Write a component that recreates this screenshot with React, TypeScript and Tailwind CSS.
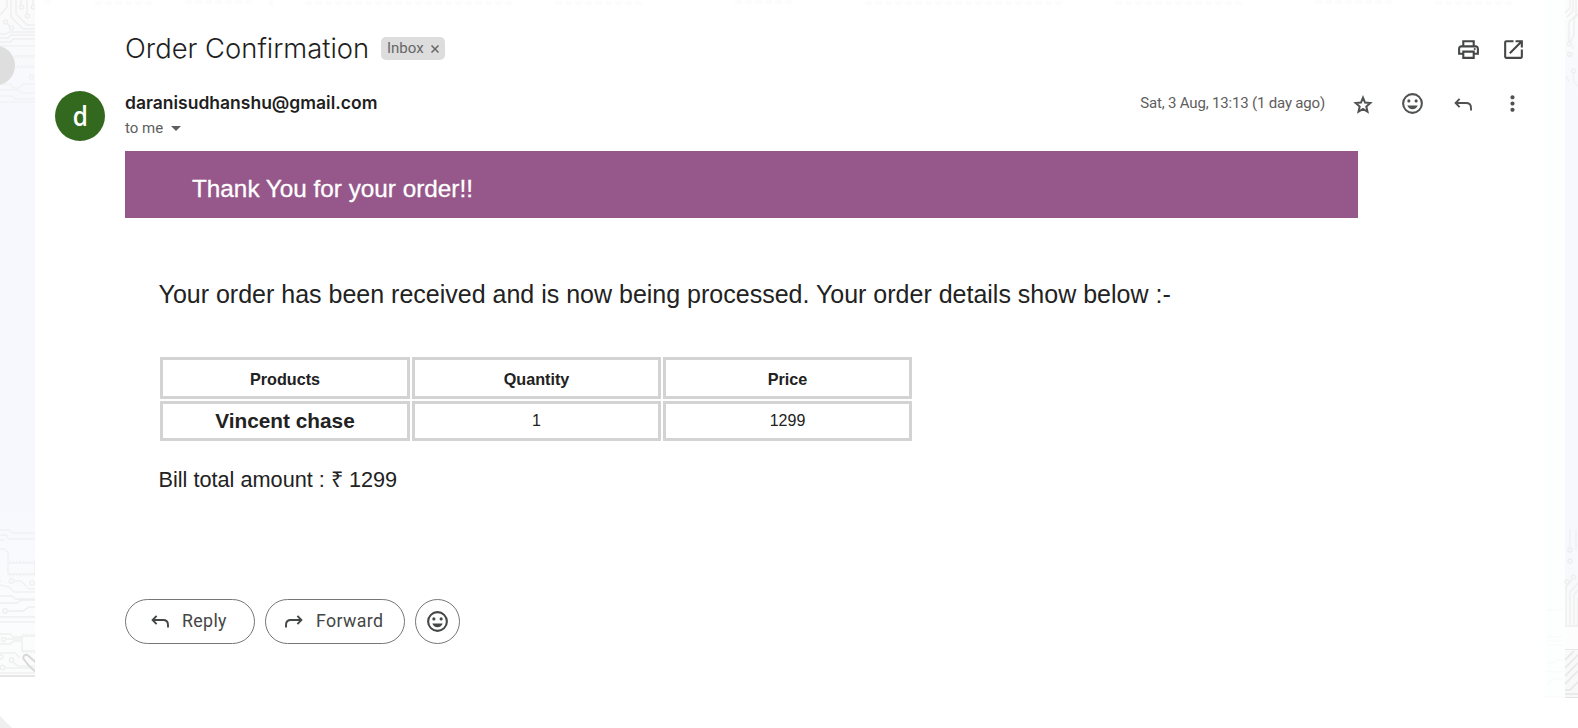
import type { ReactNode } from "react";
import { MdArrowDropDown, MdMoreVert, MdOpenInNew, MdOutlinePrint } from "react-icons/md";

function ReplyIcon({ flip = false }: { flip?: boolean }) {
  return (
    <svg viewBox="0 0 20 20" className={flip ? "size-[20px] -scale-x-100" : "size-[20px]"} fill="none" stroke="currentColor" strokeWidth="1.9">
      <path d="M6.6 3.9 2.6 8l4 4.100M2.900 8h10.200c3 0 4.900 2 4.900 4.900V15.600" />
    </svg>
  );
}

function StarIcon() {
  return (
    <svg viewBox="0 0 24 24" className="mt-[2px] size-[24px]" fill="none" stroke="currentColor" strokeWidth="2">
      <path d="m12 4.700 2 4.900 5.300.450-4 3.500 1.200 5.200-4.500-2.750-4.500 2.750 1.200-5.200-4-3.500 5.300-.450z" />
    </svg>
  );
}

function SmileIcon() {
  return (
    <svg viewBox="0 0 24 24" className="size-[25px]">
      <circle cx="12" cy="12" r="9" fill="none" stroke="currentColor" strokeWidth="2" />
      <circle cx="8.5" cy="9.5" r="1.5" fill="currentColor" />
      <circle cx="15.5" cy="9.5" r="1.5" fill="currentColor" />
      <path d="M7 14h10c-.8 2.200-2.700 3.500-5 3.500S7.800 16.200 7 14z" fill="currentColor" />
    </svg>
  );
}

/* Faded circuit-board wallpaper left of the message card */
function LeftWallpaper() {
  return (
    <svg viewBox="0 0 35 728" className="block h-[728px] w-[35px]" fill="none">
      <defs>
        <linearGradient id="lw" x1="0" y1="0" x2="0" y2="676" gradientUnits="userSpaceOnUse">
          <stop offset="0" stopColor="#fbfbfb" />
          <stop offset=".17" stopColor="#f6f8fd" />
          <stop offset=".74" stopColor="#f6f8fd" />
          <stop offset=".9" stopColor="#fbfcfd" />
          <stop offset="1" stopColor="#fcfcfc" />
        </linearGradient>
      </defs>
      <rect width="35" height="676" fill="url(#lw)" />
      <g stroke="#efefef" strokeWidth="1.500">
        <path d="M7 0v7l-7 8M11 0v17l12 12h12M16 0v14l11 11h8M21 0v5M27 0v14M33 0v5" />
        <circle cx="21.500" cy="7" r="2" />
        <circle cx="27.500" cy="16" r="2" />
        <circle cx="33.500" cy="7" r="2" />
        <circle cx="5.500" cy="22" r="2" />
        <circle cx="11.500" cy="28" r="2" />
        <path d="m7 23.500 3 3M0 34h6l3-2h26M0 38h8l3-3h24M0 42h10l3-3h22" />
      </g>
      <g stroke="#f1f2f4" strokeWidth="1.500">
        <path d="M0 46h35M14 56h21M14 67h21" />
        <path d="M14 57.500h21M14 65.500h21" strokeDasharray="1.500 2" />
        <path d="M0 84h10l4 4h5l4-4h12M0 90h18l4 3h13M0 96h12l3 3h20M0 102h35" />
        <circle cx="31.500" cy="77" r="2" />
      </g>
      <circle cx="-5" cy="65.500" r="20" fill="#dedede" />
      <g stroke="#eff1f4" strokeWidth="1.500">
        <path d="M0 530h9l4 3h22M0 535h6l3 4h26M0 540h5M0 549h4l4 3v9M8 563h27v11H8z" />
        <path d="M9 561.500h26M9 575.500h26" strokeDasharray="1.500 2" />
        <path d="M14 581h7l8 8h6M0 581h1M0 585l9 2 5 5h21" />
        <circle cx="11.500" cy="581" r="2.200" />
        <circle cx="32" cy="583" r="2.200" />
      </g>
      <g stroke="#eeefef" strokeWidth="1.400">
        <path d="M0 596h12l3 3h20M0 603h17l4-3h14M8 611h15l6-4h6M0 617h35M0 622h35" />
        <circle cx="5" cy="611" r="2.200" />
        <path d="M0 634h10l3 3h8M6 639h15M0 644h10l4-3h7M35 636H22v15h13" />
        <path d="M23 634.500h12M23 652.500h12" strokeDasharray="1.500 2" />
        <circle cx="3.500" cy="639.500" r="2" />
        <circle cx="11.500" cy="660" r="2.200" />
        <path d="m13 662 5 4h17M0 653h15l5 5M5 668h30M0 673h35" />
        <circle cx="2.500" cy="667.500" r="2.200" />
        <circle cx="1" cy="657" r="2" />
      </g>
      <path d="M36 671.500c-3-1-6-4-12-12-2-3 1-6 4-4l8 7" stroke="#d8d8d8" strokeWidth="2" />
      <path d="M0 676h35" stroke="#e6e6e6" strokeWidth="2" />
      <path d="M0 716v12h12z" fill="#efefef" />
    </svg>
  );
}

/* Same wallpaper on the right: a nearly opaque 20px band, then 13px of open background */
function RightWallpaper() {
  return (
    <svg viewBox="0 0 33 728" className="block h-[728px] w-[33px]" fill="none">
      <defs>
        <linearGradient id="rw" x1="0" y1="0" x2="0" y2="698" gradientUnits="userSpaceOnUse">
          <stop offset="0" stopColor="#fcfcfc" />
          <stop offset=".14" stopColor="#f6f8fd" />
          <stop offset=".78" stopColor="#f6f8fd" />
          <stop offset=".9" stopColor="#fafafb" />
          <stop offset="1" stopColor="#f8f8f8" />
        </linearGradient>
      </defs>
      <rect width="20" height="698" fill="#fdfefe" />
      <rect x="20" width="13" height="698" fill="url(#rw)" />
      <path d="M2 610h16M2 637h16M2 641h16M2 645h16M2 663h6l4-3h6M2 672h16M2 685l6-6h10M0 697h20" stroke="#f9f9f9" />
      <g stroke="#efefef" strokeWidth="1.500">
        <path d="M20 13l5-5V0M22 17l6-6V0M24 22v20M24 22l7-7V0M28 46v3M28 53l-4 3M33 14l-4 5v16l-4 7" />
        <circle cx="24.500" cy="44" r="2" />
        <circle cx="24.500" cy="54.500" r="2" />
        <circle cx="28.500" cy="71" r="2" />
        <path d="M21 76l3 6M28.500 73v8l4 5" stroke="#f0f1f4" />
        <path d="M25 530v18M31 530v20" stroke="#eff0f3" />
        <circle cx="25" cy="550" r="2" stroke="#ebedf0" />
        <circle cx="25" cy="561" r="2" stroke="#ebedf0" />
        <circle cx="28.500" cy="577" r="2" />
        <circle cx="22" cy="582" r="2" />
        <path d="M27 579l-6 8v38M33 583l-8 9v33M33 590l-4 5v30M33 598v27" />
      </g>
      <rect x="20" y="627" width="13" height="22" fill="#fdfdfd" />
      <path d="M20 626h13M20 649.500h13" stroke="#e8e8e8" />
      <path d="M20 660l9-9M20 668l13-13M20 676l13-13M20 684l13-13M20 690h5l8-8M20 694h13" stroke="#eaeaea" strokeWidth="1.800" />
      <path d="M20 697.500h13" stroke="#e2e2e2" />
    </svg>
  );
}

function Cell({ children, className }: { children: ReactNode; className: string }) {
  return <div className={`flex items-center justify-center border-[3px] border-[#d3d3d3] ${className}`}>{children}</div>;
}

function PillButton({ children, className }: { children: ReactNode; className: string }) {
  return (
    <button className={`flex h-[45px] items-center rounded-full border border-[#747775] text-[17.800px] font-normal tracking-[0.350px] text-[#444746] ${className}`}>
      {children}
    </button>
  );
}

export default function App() {
  return (
    <div className="flex h-[728px] w-[1578px] overflow-hidden bg-white font-['Roboto',sans-serif] text-[#222222]">
      <LeftWallpaper />
      <main className="flex w-[1510px] flex-col">
        <svg viewBox="0 0 1510 6" className="block h-[6px] w-[1510px] shrink-0">
          <path d="M10 0l8 5M60 3h60M150 2h70M236 0v6M270 3h210M520 3h90M700 2h60M830 3h200M1080 3h130M1280 2h80M1400 3h80" stroke="#fcfcfc" strokeWidth="4" strokeDasharray="7 3" fill="none" />
        </svg>
        <header className="flex h-[85px] items-center pl-[90px] pr-[19px]">
          <h1 className="w-[246px] whitespace-nowrap pb-[2px] font-['Inter',sans-serif] text-[27.400px] font-light leading-[36px] text-[#1f1f1f]">Order Confirmation</h1>
          <div className="ml-[10px] flex h-[23px] w-[64px] items-center rounded-[5px] bg-[#dddddd] pl-[6px] text-[15px] text-[#666666]">
            <span>Inbox</span>
            <svg viewBox="0 0 8 8" className="ml-[7px] mt-px size-[8px]" stroke="#666666" strokeWidth="1.500">
              <path d="m.5.5 7 7m0-7-7 7" />
            </svg>
          </div>
          <div className="ml-auto flex gap-5 pt-[2px] text-[25px] text-[#444746]">
            <MdOutlinePrint />
            <MdOpenInNew />
          </div>
        </header>
        <section className="flex h-[60px] pl-[20px]">
          <div className="flex size-[50px] items-center justify-center rounded-full bg-[#33691e] font-['Open_Sans',sans-serif] text-[27px] font-semibold text-white">
            <span className="scale-x-90">d</span>
          </div>
          <div className="ml-[20px] flex flex-col">
            <span className="font-['Inter',sans-serif] text-[17.500px] font-semibold leading-[24px] text-[#1f1f1f]">daranisudhanshu@gmail.com</span>
            <span className="flex items-center text-[15px] leading-[24px] text-[#5e5e5e]">
              to me
              <MdArrowDropDown className="ml-px mt-px size-[24px]" />
            </span>
          </div>
          <div className="ml-auto flex h-[25px] items-center pr-[20px] text-[#5e5e5e]">
            <span className="text-[15px] tracking-[-0.180px]">Sat, 3 Aug, 13:13 (1 day ago)</span>
            <div className="ml-[26px] flex items-center gap-[25px] text-[25px] text-[#505251]">
              <StarIcon />
              <SmileIcon />
              <span className="flex w-[25px] justify-center pt-[2px]"><ReplyIcon /></span>
              <MdMoreVert />
            </div>
          </div>
        </section>
        <article className="ml-[90px] flex w-[1233px] flex-col font-['Liberation_Sans',Arial,sans-serif]">
          <div className="flex h-[67px] items-center bg-[#96588a] pl-[67px] pt-[9px] text-[24.300px] text-white [-webkit-text-stroke:0.3px_white]">Thank You for your order!!</div>
          <div className="flex flex-col pl-[33px]">
            <p className="mt-[61px] whitespace-nowrap pl-[0.5px] text-[25px] leading-[30px]">Your order has been received and is now being processed. Your order details show below :-</p>
            <div className="ml-[2px] mt-[48px] grid grid-cols-[250px_249px_249px] grid-rows-[42px_40px] gap-[2px] text-[16px]">
              <Cell className="pt-[2px] text-[16.200px] font-bold">Products</Cell>
              <Cell className="pt-[2px] text-[16.200px] font-bold">Quantity</Cell>
              <Cell className="pt-[2px] text-[16.200px] font-bold">Price</Cell>
              <Cell className="text-[20.800px] font-bold">Vincent chase</Cell>
              <Cell className="">1</Cell>
              <Cell className="">1299</Cell>
            </div>
            <p className="mt-[25px] pl-[0.5px] text-[21.700px] leading-[28px]">Bill total amount : ₹ 1299</p>
          </div>
        </article>
        <footer className="ml-[90px] mt-[105px] flex gap-[10px]">
          <PillButton className="w-[130px] pl-[24px]">
            <ReplyIcon />
            <span className="ml-[12px]">Reply</span>
          </PillButton>
          <PillButton className="w-[140px] pl-[18px]">
            <ReplyIcon flip />
            <span className="ml-[12px]">Forward</span>
          </PillButton>
          <PillButton className="w-[45px] justify-center">
            <SmileIcon />
          </PillButton>
        </footer>
      </main>
      <RightWallpaper />
    </div>
  );
}
